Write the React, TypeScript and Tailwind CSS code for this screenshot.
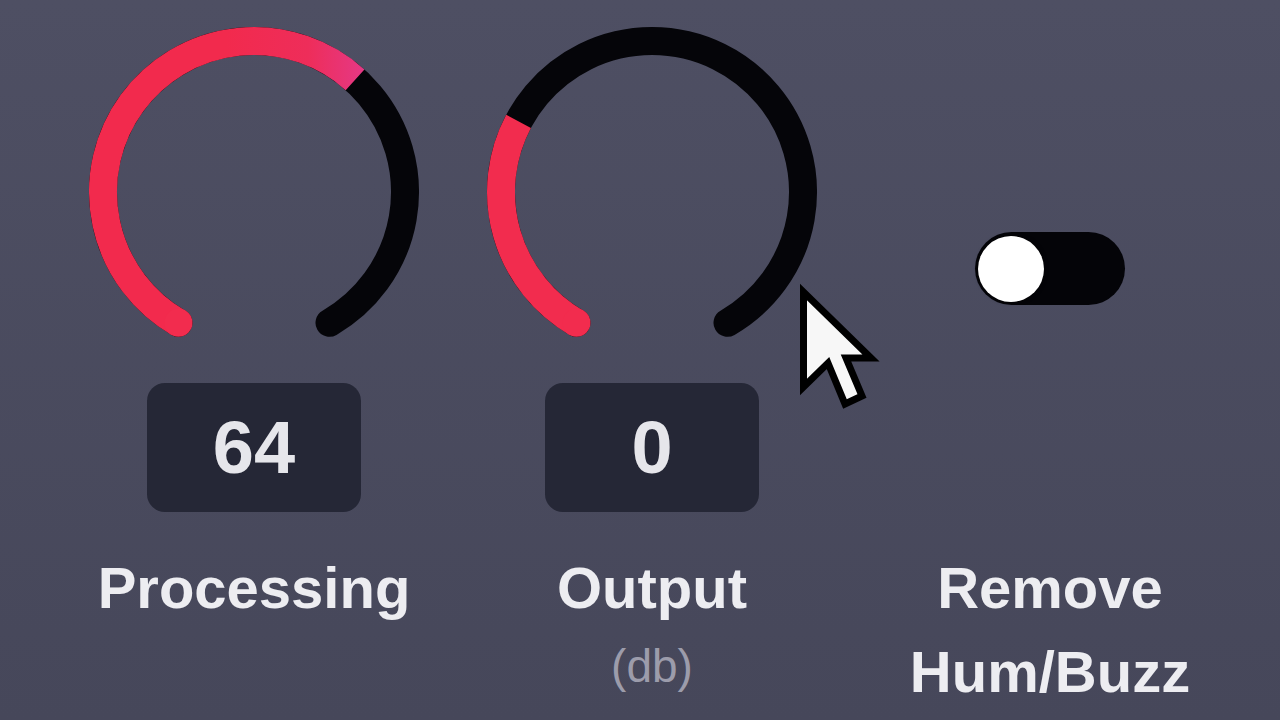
import React from "react";

const FONT = { fontFamily: '"Liberation Sans", Arial, sans-serif' };

// Clock-style angle (0 = top, clockwise) to a point on the circle.
function pt(cx: number, cy: number, r: number, deg: number) {
  const a = (deg * Math.PI) / 180;
  return [cx + r * Math.sin(a), cy - r * Math.cos(a)];
}

function arc(cx: number, cy: number, r: number, from: number, to: number) {
  const [x1, y1] = pt(cx, cy, r, from);
  const [x2, y2] = pt(cx, cy, r, to);
  const large = to - from > 180 ? 1 : 0;
  return `M ${x1} ${y1} A ${r} ${r} 0 ${large} 1 ${x2} ${y2}`;
}

const START = 210;
const SWEEP = 300;

function Knob({ value, id, gradient }: { value: number; id: string; gradient?: boolean }) {
  const cx = 178;
  const cy = 178;
  const r = 151;
  const end = START + SWEEP * value;
  const [sx, sy] = pt(cx, cy, r, START);
  const stroke = gradient ? `url(#${id})` : "#f22c4e";
  return (
    <svg width={356} height={330} viewBox="0 0 356 330">
      <defs>
        <linearGradient id={id} gradientUnits="userSpaceOnUse" x1="150" y1="0" x2="300" y2="0">
          <stop offset="0" stopColor="#f22a4d" />
          <stop offset="0.55" stopColor="#ee2d5a" />
          <stop offset="1" stopColor="#e33b8e" />
        </linearGradient>
      </defs>
      <path d={arc(cx, cy, r, START, START + SWEEP)} fill="none" stroke="#050509" strokeWidth={28} strokeLinecap="round" />
      <path d={arc(cx, cy, r, START, end)} fill="none" stroke={stroke} strokeWidth={28} strokeLinecap="butt" />
      <circle cx={sx} cy={sy} r={14} fill="#f22c4e" />
    </svg>
  );
}

function ValueBox({ children }: { children: React.ReactNode }) {
  return (
    <div className="mt-[39px] flex h-[129px] w-[214px] items-center justify-center rounded-[18px] bg-[#252736]">
      <span className="text-[74px] font-bold leading-none text-[#e6e6eb]">{children}</span>
    </div>
  );
}

function Label({ children }: { children: React.ReactNode }) {
  return <div className="text-center text-[58px] font-bold leading-[84px] text-[#ededf1]">{children}</div>;
}

function Cursor() {
  return (
    <svg className="absolute left-[795px] top-[278px]" width={92} height={140} viewBox="795 278 92 140">
      <polygon
        points="803.5,292 803.5,387 828,363 845,404 862,396 846,358 871,358"
        fill="#f7f7f7"
        stroke="#000"
        strokeWidth={7}
        strokeLinejoin="miter"
      />
    </svg>
  );
}

export default function App() {
  return (
    <div
      className="relative h-[720px] w-[1280px] overflow-hidden bg-gradient-to-b from-[#4e4f63] to-[#46475a]"
      style={FONT}
    >
      <div className="flex items-start pl-[76px] pt-[14px]">
        <div className="flex w-[356px] flex-col items-center">
          <Knob value={0.64} id="proc" gradient />
          <ValueBox>64</ValueBox>
          <div className="mt-[34px]">
            <Label>Processing</Label>
          </div>
        </div>

        <div className="ml-[42px] flex w-[356px] flex-col items-center">
          <Knob value={0.293} id="out" />
          <ValueBox>0</ValueBox>
          <div className="mt-[34px]">
            <Label>Output</Label>
          </div>
          <div className="mt-[13px] text-[46px] leading-none text-[#9c9cab]">(db)</div>
        </div>

        <div className="ml-[42px] flex w-[356px] flex-col items-center">
          <div className="mt-[218px] flex h-[73px] w-[150px] items-center rounded-full bg-[#040408] px-[3px]">
            <div className="h-[66px] w-[66px] rounded-full bg-white shadow-[0_0_4px_rgba(0,0,0,0.6)]" />
          </div>
          <div className="mt-[241px]">
            <Label>
              Remove
              <br />
              Hum/Buzz
            </Label>
          </div>
        </div>
      </div>
      <Cursor />
    </div>
  );
}
